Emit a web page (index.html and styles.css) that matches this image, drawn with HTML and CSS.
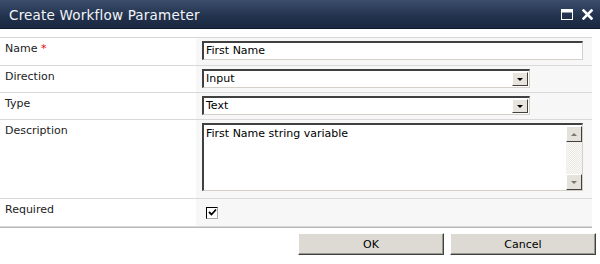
FILE: index.html
```html
<!DOCTYPE html>
<html>
<head>
<meta charset="utf-8">
<link rel="stylesheet" href="styles.css">
</head>
<body>
<div class="dialog">
  <div class="titlebar">
    <span class="title">Create Workflow Parameter</span>
    <div class="tools">
      <svg class="ico" width="12" height="11" viewBox="0 0 12 11"><rect x="0.5" y="0.5" width="11" height="10" fill="none" stroke="#fff" stroke-width="1"/><rect x="1" y="1" width="10" height="2.5" fill="#fff"/></svg>
      <svg class="ico" width="11" height="11" viewBox="0 0 11 11"><path d="M1.5 1.5 L9.5 9.5 M9.5 1.5 L1.5 9.5" stroke="#fff" stroke-width="2.6" stroke-linecap="square"/></svg>
    </div>
  </div>
  <div class="form">
    <div class="row r-name">
      <div class="label">Name <span class="req">*</span></div>
      <div class="field"><div class="input wide">First Name</div></div>
    </div>
    <div class="row r-sel">
      <div class="label">Direction</div>
      <div class="field"><div class="input select">Input<span class="drop"><i></i></span></div></div>
    </div>
    <div class="row r-sel">
      <div class="label">Type</div>
      <div class="field"><div class="input select">Text<span class="drop"><i></i></span></div></div>
    </div>
    <div class="row r-desc">
      <div class="label">Description</div>
      <div class="field">
        <div class="input area">
          <div class="area-text">First Name string variable</div>
          <div class="scroll">
            <span class="sbtn up"><i></i></span>
            <span class="track"></span>
            <span class="sbtn down"><i></i></span>
          </div>
        </div>
      </div>
    </div>
    <div class="row r-req">
      <div class="label">Required</div>
      <div class="field"><span class="check"><svg width="9" height="9" viewBox="0 0 9 9"><path d="M1 4 L3.5 6.5 L8 1.5" fill="none" stroke="#000" stroke-width="1.8"/></svg></span></div>
    </div>
  </div>
  <div class="buttons">
    <button class="btn">OK</button>
    <button class="btn">Cancel</button>
  </div>
</div>
</body>
</html>
```
FILE: styles.css
```css
* { box-sizing: border-box; }
html, body { margin: 0; padding: 0; }
body {
  width: 600px;
  height: 264px;
  background: #fff;
  font-family: "DejaVu Sans", Verdana, sans-serif;
  font-size: 11px;
  color: #000;
  overflow: hidden;
}
.dialog { width: 600px; height: 264px; background: #fff; }
.titlebar {
  height: 29px;
  background: linear-gradient(#3a4d6b, #22324d 60%, #1a2740);
  border-bottom: 1px solid #0f1a2c;
  display: flex;
  align-items: center;
  justify-content: space-between;
  padding: 0 7px 0 9px;
}
.title {
  color: #f2f4f8;
  font-size: 13.5px;
  letter-spacing: 0.2px;
  font-family: "DejaVu Sans", sans-serif;
  padding-top: 1px;
}
.tools { display: flex; gap: 9px; align-items: center; }
.ico { display: block; }
.form {
  margin: 8px 8px 0 0;
  border-top: 1px solid #d8d8d8;
}
.row {
  display: grid;
  grid-template-columns: 202px 1fr;
  border-bottom: 1px solid #d8d8d8;
  background: linear-gradient(90deg, #fff 0, #fff 196px, #f7f7f7 196px);
}
.label { padding: 4px 0 0 5px; color: #222; }
.req { color: #e00; }
.field { padding: 3px 0 3px 0; }
.r-name { height: 28px; }
.r-sel { height: 27px; }
.r-desc { height: 79px; }
.r-req { height: 28px; }
.input {
  height: 19px;
  background: #fff;
  border-top: 2px solid #404040;
  border-left: 2px solid #404040;
  border-right: 1px solid #d4d0c8;
  border-bottom: 1px solid #d4d0c8;
  padding: 1px 0 0 2px;
  line-height: 14px;
  position: relative;
}
.wide { width: 381px; }
.select { width: 328px; display: flex; justify-content: space-between; }
.drop {
  width: 16px;
  height: 14px;
  margin: 0 1px 0 0;
  background: #e6e4dd;
  border: 1px solid;
  border-color: #fff #404040 #404040 #fff;
  display: flex;
  align-items: center;
  justify-content: center;
}
.drop i {
  width: 0; height: 0;
  border-left: 3px solid transparent;
  border-right: 3px solid transparent;
  border-top: 3px solid #000;
}
.area {
  width: 381px;
  height: 68px;
  display: flex;
  justify-content: space-between;
  padding: 2px 0 0 2px;
}
.scroll {
  width: 16px;
  display: flex;
  flex-direction: column;
  margin-top: -1px;
}
.sbtn {
  height: 16px;
  background: #e4e2db;
  border: 1px solid;
  border-color: #fff #404040 #404040 #fff;
  display: flex;
  align-items: center;
  justify-content: center;
}
.sbtn.up i {
  width: 0; height: 0;
  border-left: 3px solid transparent;
  border-right: 3px solid transparent;
  border-bottom: 3px solid #777;
}
.sbtn.down i {
  width: 0; height: 0;
  border-left: 3px solid transparent;
  border-right: 3px solid transparent;
  border-top: 3px solid #777;
}
.track {
  flex: 1;
  background: repeating-conic-gradient(#e9e8e3 0 25%, #fafaf8 0 50%) 0 0 / 2px 2px;
}
.r-req .field { padding: 8px 0 0 4px; }
.check {
  display: block;
  width: 12px;
  height: 12px;
  background: #fff;
  border: 1px solid #000;
  border-right-color: #aaa;
  border-bottom-color: #aaa;
  padding: 0 0 0 1px;
}
.check svg { display: block; }
.buttons {
  margin-right: 8px;
  border-top: 1px solid #b8b8b8;
  display: flex;
  justify-content: flex-end;
  gap: 6px;
  padding: 5px 0 0;
}
.btn {
  width: 146px;
  height: 22px;
  font-family: "DejaVu Sans", Verdana, sans-serif;
  font-size: 11px;
  color: #000;
  background: #dcdad3;
  border: 1px solid;
  border-color: #fff #404040 #404040 #fff;
  box-shadow: inset -1px -1px 0 #9a9890;
  padding: 0;
}
.buttons .btn:last-child { margin-right: -4px; }
```
